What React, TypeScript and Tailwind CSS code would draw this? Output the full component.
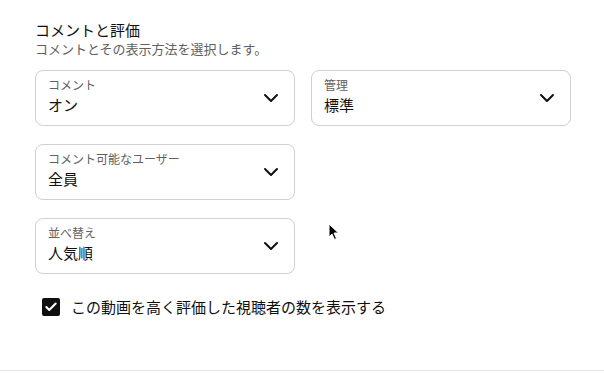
import { ChevronDown, Check } from 'lucide-react';

type Field = {
  label: string;
  value: string;
};

const SelectBox = ({ label, value }: Field) => {
  return (
    <div className="h-14 w-[260px] rounded-lg border border-[#d0d0d0] bg-white pl-3 pr-[11px] flex items-center">
      <div className="flex-1 self-start pt-[6px]">
        <div className="text-[12px] leading-[16px] text-[#606060]">{label}</div>
        <div className="mt-[2px] text-[15px] leading-[20px] text-[#0f0f0f]">{value}</div>
      </div>
      <ChevronDown className="w-6 h-6 text-[#0f0f0f]" strokeWidth={2} />
    </div>
  );
};

const App = () => {
  return (
    <div
      className="relative h-[374px] w-[604px] bg-white flex flex-col overflow-hidden"
      style={{ fontFamily: '"Noto Sans CJK JP", "Noto Sans", sans-serif' }}
    >
      <div className="pl-[35px] pt-[19px]">
        {/* Heading */}
        <h2 className="text-[15px] leading-[22px] text-[#0f0f0f]">コメントと評価</h2>
        <p className="text-[13px] leading-[16px] text-[#606060]">コメントとその表示方法を選択します。</p>

        {/* Selects */}
        <div className="mt-[13px] grid grid-cols-[260px_260px] gap-x-4 gap-y-[18px]">
          <SelectBox label="コメント" value="オン" />
          <SelectBox label="管理" value="標準" />
          <SelectBox label="コメント可能なユーザー" value="全員" />
          <div />
          <SelectBox label="並べ替え" value="人気順" />
        </div>

        {/* Checkbox */}
        <label className="mt-[23px] ml-[7px] flex items-center gap-[11px]">
          <span className="w-[18px] h-[18px] rounded-[2px] bg-[#0f0f0f] flex items-center justify-center">
            <Check className="w-[14px] h-[14px] text-white" strokeWidth={3.5} />
          </span>
          <span className="text-[15px] leading-[20px] text-[#0f0f0f]">この動画を高く評価した視聴者の数を表示する</span>
        </label>
      </div>

      <div className="flex-1" />
      <div className="h-[4px] border-t border-[#e5e5e5]" />

      {/* Mouse pointer */}
      <svg className="absolute left-[328px] top-[223px]" width="12" height="18" viewBox="0 0 12 18">
        <path d="M1 1 L1 14 L4 11 L6.5 16.5 L8.5 15.5 L6 10 L10.5 10 Z" fill="#000" stroke="#fff" strokeWidth="1" />
      </svg>
    </div>
  );
};

export default App;
